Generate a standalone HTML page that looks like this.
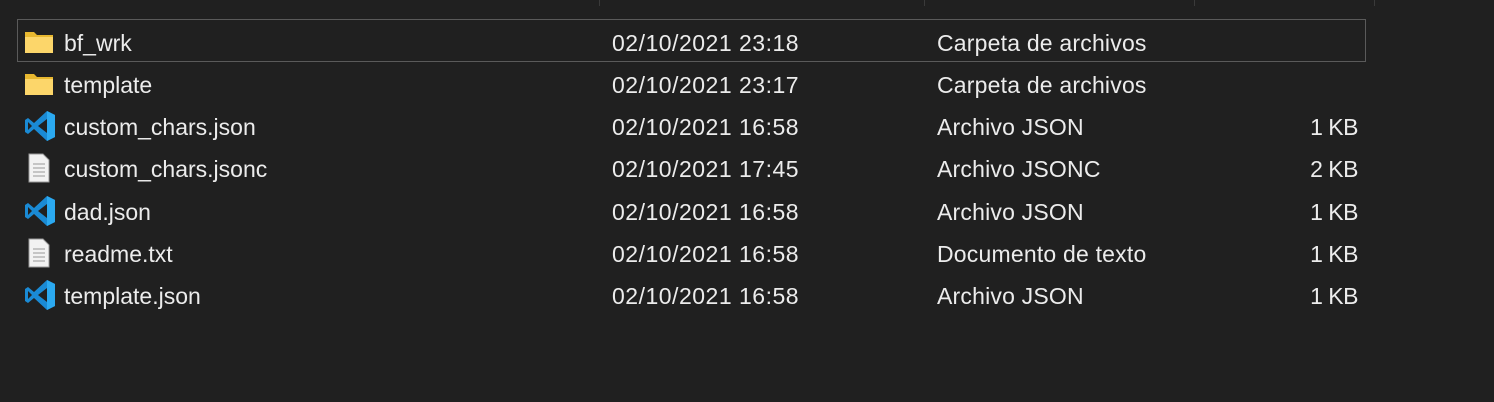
<!DOCTYPE html>
<html><head><style>
body{margin:0;width:1494px;height:402px;background:#202020;overflow:hidden;font-family:"Liberation Sans",sans-serif;color:#ececec;font-size:23px;position:relative}
.sep{position:absolute;top:0;width:1px;height:6px;background:#3a3a3a}
.sel{position:absolute;left:17px;top:19px;width:1349px;height:43px;border:1px solid #5a5a5a;box-sizing:border-box}
.row{position:absolute;left:0;height:42px;width:1494px}
.row span{position:absolute;top:50%;transform:translateY(-45%);white-space:nowrap}
.n{left:64px}.d{left:612px;letter-spacing:0.5px}.t{left:937px;letter-spacing:0.2px}.s{right:136px;letter-spacing:-0.5px}
.ic{position:absolute;left:24px;top:50%;transform:translateY(-50%)}
</style></head><body>
<div class="sep" style="left:599px"></div><div class="sep" style="left:924px"></div><div class="sep" style="left:1194px"></div><div class="sep" style="left:1374px"></div>
<div class="sel"></div>
<svg width="0" height="0" style="position:absolute"><defs>
<g id="fold"><path d="M1 2h9l3 3h16v18H1z" fill="#e8b830"/><path d="M1 7h28v16H1z" fill="#fcd66a"/></g>
<g id="vs"><path d="M23 1l8 4v22l-8 4L10 19l-6 5-3-2V10l3-2 6 5z" fill="#1a8ad4"/><path d="M23 1l8 4v22l-8 4z" fill="#2ba9f0"/><path d="M23 9v14l-9-7z" fill="#202020"/><path d="M4 12l4 4-4 4z" fill="#202020"/></g>
<g id="doc"><path d="M2 1h14l6 6v22H2z" fill="#f2f2f2" stroke="#999" stroke-width="1"/><path d="M6 11h12M6 15h12M6 19h12M6 23h12" stroke="#aaa" stroke-width="1.3"/></g>
</defs></svg>
<div class="row" style="top:21px"><svg class="ic" width="30" height="24"><use href="#fold"/></svg><span class="n">bf_wrk</span><span class="d">02/10/2021 23:18</span><span class="t">Carpeta de archivos</span></div>
<div class="row" style="top:63px"><svg class="ic" width="30" height="24"><use href="#fold"/></svg><span class="n">template</span><span class="d">02/10/2021 23:17</span><span class="t">Carpeta de archivos</span></div>
<div class="row" style="top:105px"><svg class="ic" width="32" height="32"><use href="#vs"/></svg><span class="n">custom_chars.json</span><span class="d">02/10/2021 16:58</span><span class="t">Archivo JSON</span><span class="s">1 KB</span></div>
<div class="row" style="top:147px"><svg class="ic" width="26" height="30" style="left:27px"><use href="#doc"/></svg><span class="n">custom_chars.jsonc</span><span class="d">02/10/2021 17:45</span><span class="t">Archivo JSONC</span><span class="s">2 KB</span></div>
<div class="row" style="top:190px"><svg class="ic" width="32" height="32"><use href="#vs"/></svg><span class="n">dad.json</span><span class="d">02/10/2021 16:58</span><span class="t">Archivo JSON</span><span class="s">1 KB</span></div>
<div class="row" style="top:232px"><svg class="ic" width="26" height="30" style="left:27px"><use href="#doc"/></svg><span class="n">readme.txt</span><span class="d">02/10/2021 16:58</span><span class="t">Documento de texto</span><span class="s">1 KB</span></div>
<div class="row" style="top:274px"><svg class="ic" width="32" height="32"><use href="#vs"/></svg><span class="n">template.json</span><span class="d">02/10/2021 16:58</span><span class="t">Archivo JSON</span><span class="s">1 KB</span></div>
</body></html>
